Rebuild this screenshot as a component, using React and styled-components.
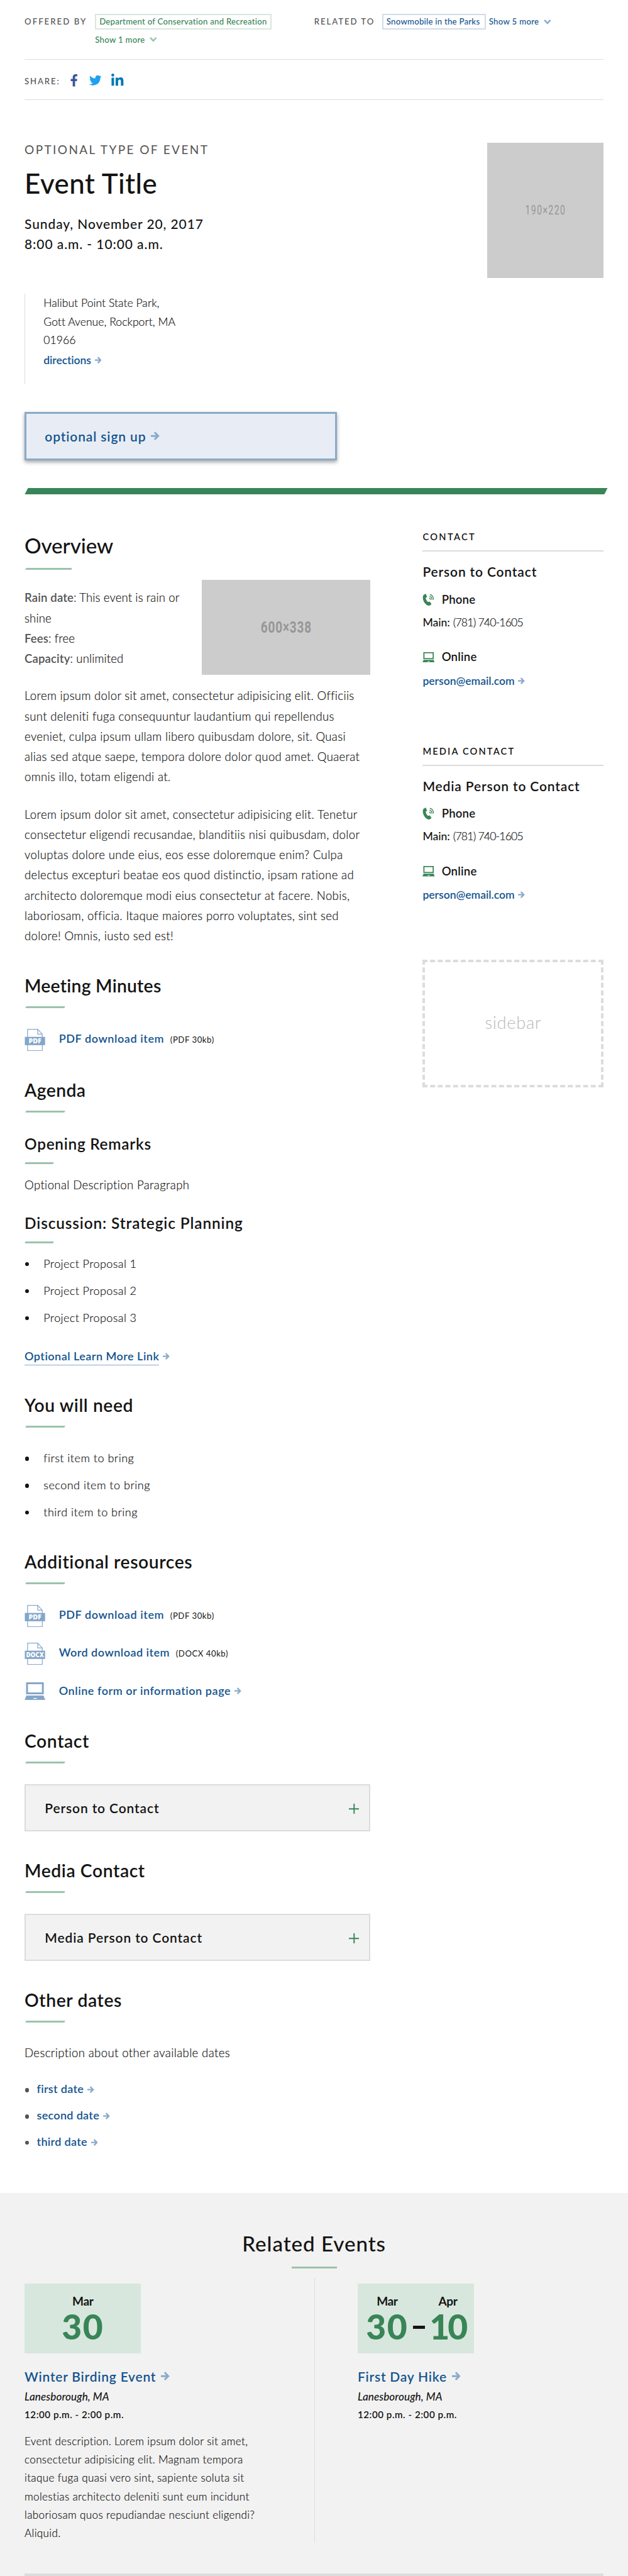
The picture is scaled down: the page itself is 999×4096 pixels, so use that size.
import React from "react";
import styled, { createGlobalStyle, css } from "styled-components";
import { FaFacebookF, FaTwitter, FaLinkedinIn } from "react-icons/fa";

const c = {
  ink: "#141414", gray: "#535353", rule: "#dcdcdc", panel: "#f2f2f2",
  green: "#388557", greenSoft: "#9bc3ab", greenPale: "#d8e7dd",
  blue: "#14558f", blueSoft: "#8aaaca", bluePale: "#e8edf5",
};

const GlobalStyle = createGlobalStyle`
  * { box-sizing: border-box; }
  body { margin: 0; background: #fff; overflow: hidden; }
  h1, h2, h3, p, ul { margin: 0; padding: 0; font-weight: inherit; }
  ul { list-style: none; }
  a { text-decoration: none; color: inherit; }
`;

const spaced = css`letter-spacing: ${(p) => p.$ls || 0}px;`;
const light = css`
  font-weight: 300;
  -webkit-text-stroke: 0.22px currentColor;
`;

const Page = styled.div`
  zoom: 0.9759;
  width: 1024px;
  font-family: Lato, "Open Sans", sans-serif;
  color: ${c.ink};
  white-space: nowrap;
`;
const Container = styled.div`padding: 0 40px;`;

/* ---- header ---- */
const Relations = styled.div`
  display: grid;
  grid-template-columns: 472px 1fr;
  height: 97px;
  padding-top: 23px;
  border-bottom: 1.1px solid ${c.rule};
  font-size: 13.5px;
  line-height: 25px;
  font-weight: 500;
`;
const Relation = styled.div`display: flex;`;
const Label = styled.span`
  font-size: 13.5px;
  font-weight: 500;
  color: ${c.gray};
  letter-spacing: ${(p) => p.$ls}px;
  width: ${(p) => p.$w}px;
`;
const TagList = styled.div`
  display: flex;
  align-items: flex-start;
  flex-direction: ${(p) => (p.$stack ? "column" : "row")};
  gap: ${(p) => (p.$stack ? 4 : 5)}px;
  color: ${(p) => (p.$stack ? c.green : c.blue)};
`;
const Tag = styled.a`
  display: block;
  height: 25px;
  line-height: 21px;
  width: ${(p) => p.$w}px;
  padding-left: 5px;
  border: 2.1px solid ${(p) => (p.$green ? c.greenPale : "#d0dcea")};
  ${spaced}
`;
const More = styled.span`
  display: flex;
  align-items: center;
  gap: 8px;
  ${spaced}
`;
const Share = styled.div`
  display: flex;
  align-items: center;
  height: 66px;
  padding-top: 3px;
  border-bottom: 1.1px solid ${c.rule};
  ${Label} { padding-top: 3px; }
`;
const Social = styled.span`
  display: flex;
  justify-content: center;
  width: 22px;
  margin-left: ${(p) => p.$gap}px;
  color: ${(p) => p.$color};
`;

/* ---- hero ---- */
const Hero = styled.div`
  display: flex;
  justify-content: space-between;
  padding-top: 70px;
`;
const EventType = styled.p`
  font-size: 19.5px;
  line-height: 22px;
  letter-spacing: 2.45px;
  color: ${c.gray};
`;
const Title = styled.h1`
  margin-top: 17px;
  font-size: 45px;
  line-height: 54px;
  font-weight: 500;
  letter-spacing: 0.5px;
`;
const When = styled.p`
  margin-top: 22.5px;
  font-size: 21.5px;
  line-height: 33px;
  font-weight: 500;
  letter-spacing: 0.95px;
`;
const Placeholder = styled.div`
  display: flex;
  align-items: center;
  justify-content: center;
  flex: none;
  width: ${(p) => p.$w}px;
  height: ${(p) => p.$h}px;
  background: #ccc;
  color: #969696;
  font: ${(p) => (p.$bold ? 700 : 400)} ${(p) => p.$size}px Roboto, sans-serif;
  letter-spacing: ${(p) => p.$ls}px;
  span { transform: scaleX(0.72); }
`;
const Address = styled.div`
  margin-top: 27px;
  height: 147px;
  padding-left: 30px;
  border-left: 1.1px solid ${c.rule};
  font-size: 18px;
  line-height: 30px;
  letter-spacing: 0.05px;
  p { margin-top: -1px; ${light} }
`;
const TextLink = styled.a`
  display: flex;
  align-items: center;
  gap: ${(p) => p.$gap ?? 6}px;
  min-height: ${(p) => p.$lh || 28}px;
  margin-top: ${(p) => p.$mt || 0}px;
  font-size: ${(p) => p.$size || 18}px;
  line-height: ${(p) => p.$lh || 28}px;
  font-weight: 600;
  color: ${c.blue};
  -webkit-text-stroke: 0;
  ${spaced}
`;
const SignUp = styled.a`
  display: flex;
  align-items: center;
  gap: 8px;
  width: 509px;
  height: 79px;
  margin-top: 45px;
  padding-left: 30px;
  border: 3.1px solid ${c.blueSoft};
  background: ${c.bluePale};
  box-shadow: 0 3px 6px rgba(0, 0, 0, 0.35);
  color: ${c.blue};
  font-size: 21.5px;
  font-weight: 600;
  letter-spacing: 0.9px;
`;
const Band = styled.div`
  height: 10px;
  margin: 45px -4px 0 3.5px;
  background: ${c.green};
  transform: skewX(-27deg);
`;

/* ---- body ---- */
const Columns = styled.div`
  display: grid;
  grid-template-columns: 564px 295px;
  gap: 85px;
  height: 2768px;
`;
const Heading = styled.h2`
  margin-top: ${(p) => p.$mt}px;
  font-size: ${(p) => (p.$large ? 34 : 29)}px;
  line-height: ${(p) => (p.$large ? 42 : 36)}px;
  font-weight: ${(p) => (p.$large ? 500 : 600)};
  ${spaced}
  &::after {
    content: "";
    display: block;
    width: ${(p) => (p.$large ? 75 : 64)}px;
    height: 3px;
    margin: ${(p) => (p.$large ? 16 : 15)}px 0 0 2.5px;
    background: ${c.greenSoft};
    transform: skewX(-27deg);
  }
`;
const SubHeading = styled.h3`
  margin-top: ${(p) => p.$mt}px;
  font-size: 25px;
  line-height: 30px;
  font-weight: 600;
  ${spaced}
  &::after {
    content: "";
    display: block;
    width: 46px;
    height: 3px;
    margin: 14.5px 0 0 1.5px;
    background: ${c.greenSoft};
    transform: skewX(-27deg);
  }
`;
const Facts = styled.div`
  display: flex;
  justify-content: space-between;
  margin-top: 16px;
`;
const Copy = styled.p`
  margin-top: ${(p) => p.$mt || 0}px;
  font-size: 19px;
  line-height: 33px;
  ${light}
  ${spaced}
  b { font-weight: 600; color: ${c.gray}; -webkit-text-stroke: 0; }
`;
const Bullets = styled.ul`
  margin-top: ${(p) => p.$mt}px;
  font-size: 18.5px;
  line-height: 44px;
  ${light}
  ${spaced}
  li { display: flex; align-items: center; }
  li::before {
    content: "";
    width: 6.5px;
    height: 6.5px;
    margin: 2px 24px 0 0.5px;
    border-radius: 50%;
    background: ${c.ink};
  }
`;
const DateLinks = styled(Bullets)`
  line-height: 43px;
  li::before { margin-right: 13px; background: ${c.gray}; }
`;
const Underlined = styled.span`
  line-height: 26px;
  border-bottom: 1.1px solid ${c.blueSoft};
  margin-top: 2px;
`;
const Download = styled.div`
  display: flex;
  align-items: center;
  height: ${(p) => p.$h || 36}px;
  margin-top: ${(p) => p.$mt}px;
  & > svg { margin-right: 22px; flex: none; }
  ${TextLink} { margin-bottom: ${(p) => (p.$h ? 1 : 4)}px; }
`;
const Size = styled.span`
  margin: 0 0 1px 10px;
  font-size: 13.5px;
  letter-spacing: 0.56px;
`;
const Accordion = styled.div`
  display: flex;
  align-items: center;
  justify-content: space-between;
  height: 77px;
  margin-top: 34px;
  padding: 0 16.5px 0 31px;
  border: 2.1px solid ${c.rule};
  background: ${c.panel};
  font-size: 21.5px;
  font-weight: 600;
  letter-spacing: 0.9px;
  svg { margin-top: 3px; }
`;

/* ---- sidebar ---- */
const ContactCard = styled.section`margin-top: ${(p) => p.$mt}px;`;
const CardLabel = styled.h2`
  padding-bottom: 12px;
  border-bottom: 2.1px solid ${c.rule};
  font-size: 15px;
  line-height: 20px;
  font-weight: 600;
  ${spaced}
`;
const CardName = styled.h3`
  margin: 18.5px 0 19.5px;
  font-size: 21.5px;
  line-height: 28px;
  font-weight: 600;
  letter-spacing: 0.88px;
`;
const Channel = styled.div`
  display: flex;
  align-items: center;
  gap: 11px;
  height: 24px;
  margin-top: ${(p) => p.$mt || 0}px;
  font-size: 19px;
  line-height: 22px;
  font-weight: 600;
  letter-spacing: 0.25px;
`;
const Phone = styled.p`
  margin-top: 11px;
  font-size: 18px;
  line-height: 28px;
  ${light}
  letter-spacing: -0.8px;
  b { font-weight: 500; letter-spacing: 0; -webkit-text-stroke: 0; margin-right: 1px; }
`;
const Slot = styled.div`
  display: flex;
  align-items: center;
  justify-content: center;
  height: 208px;
  margin-top: 92px;
  padding-bottom: 4px;
  border: 4.1px dashed ${c.rule};
  color: #b9b9b9;
  font-size: 28px;
  font-weight: 300;
  letter-spacing: 0.7px;
`;

/* ---- related events ---- */
const Related = styled.section`
  height: 625px;
  padding: 62px 40px 0;
  background: ${c.panel};
`;
const RelatedTitle = styled.h2`
  text-align: center;
  font-size: 34px;
  line-height: 42px;
  font-weight: 500;
  letter-spacing: 0.95px;
  &::after {
    content: "";
    display: block;
    width: 74px;
    height: 3px;
    margin: 16px auto 0;
    background: ${c.greenSoft};
  }
`;
const Events = styled.div`
  display: grid;
  grid-template-columns: 473px 1fr;
  height: 431px;
  margin-top: 16px;
`;
const Event = styled.article`
  padding: 9px 0 0 ${(p) => (p.$second ? 70 : 0)}px;
  border-right: ${(p) => (p.$second ? "0" : `1.1px solid ${c.rule}`)};
`;
const DateBox = styled.div`
  display: flex;
  justify-content: center;
  align-items: flex-end;
  gap: 7px;
  width: 190px;
  height: 114px;
  padding-bottom: 16px;
  background: ${c.greenPale};
`;
const Day = styled.div`
  text-align: center;
  width: ${(p) => p.$w}px;
  font-size: 19.5px;
  line-height: 24px;
  font-weight: 700;
  letter-spacing: -0.4px;
  strong {
    display: block;
    margin-top: 2px;
    font-size: 56.5px;
    line-height: 56px;
    font-weight: 900;
    letter-spacing: ${(p) => p.$ls}px;
    color: ${c.green};
  }
`;
const Dash = styled.span`
  width: 20px;
  height: 6px;
  margin-bottom: 24px;
  background: ${c.ink};
`;
const Place = styled.p`
  margin-top: 3.5px;
  font-size: 17.5px;
  line-height: 28px;
  font-weight: 500;
  font-style: italic;
  letter-spacing: 0.1px;
`;
const Hours = styled.p`
  margin-top: 4.5px;
  font-size: 15.5px;
  line-height: 24px;
  font-weight: 600;
  letter-spacing: 0.55px;
`;
const Summary = styled.p`
  margin-top: 15.5px;
  font-size: 17.5px;
  line-height: 30px;
  ${light}
  letter-spacing: 0.36px;
`;
const EndRule = styled.div`
  height: 4px;
  margin-top: 50.5px;
  background: ${c.rule};
`;

/* ---- icons ---- */
const Arrow = ({ size = 11 }) => (
  <svg width={size} height={size * 1.05} viewBox="0 0 11 11.5" fill="none" stroke={c.blueSoft} strokeWidth="2.4">
    <path d="M0 5.75H8.6M4.7 1l4.7 4.75-4.7 4.75" />
  </svg>
);
const Chevron = ({ color }) => (
  <svg width="12" height="8" viewBox="0 0 12 8" fill="none" stroke={color} strokeWidth="2.6">
    <path d="M1.2 1L6 6l4.8-5" />
  </svg>
);
const Plus = () => (
  <svg width="17" height="17" viewBox="0 0 17 17" stroke={c.green} strokeWidth="2">
    <path d="M8.5 0v17M0 8.5h17" />
  </svg>
);
const PhoneIcon = () => (
  <svg width="20" height="20" viewBox="0 0 20 20">
    <path fill={c.green} d="M1.4 2.6 4.6.3c.5-.3.9-.1 1.1.4l1.5 3.7c.2.5.1.9-.3 1.2L5.3 7c.3 2.9 1.9 5.400 4.100 6.700l2-.7c.5-.2.9 0 1.100.4l2 3.200c.3.5.2.9-.3 1.200l-2.900 1.800C4.900 19.700-1.600 9.500 1.400 2.600z" />
    <g fill="none" stroke={c.green} strokeWidth="1.400">
      <path d="M11.100 7.200c1.400.3 1.900 1.300 1.700 2.700M11.500 4.200c2.800.5 4.100 2.800 3.700 5.700M12.200 1.300c4.200.8 6.200 4.500 5.400 8.600" />
    </g>
  </svg>
);
const Laptop = ({ w, h, color }) => (
  <svg width={w} height={h} viewBox="0 0 33 29" preserveAspectRatio="none">
    <rect x="4" y="1.5" width="25" height="16.5" fill="none" stroke={color} strokeWidth="3" />
    <path fill={color} d="M3 21.5h27l3 7.5H0zM14 25.5v1.5h5.5v-1.5z" fillRule="evenodd" />
  </svg>
);
const FileIcon = ({ type }) => (
  <svg width="34" height="36" viewBox="0 0 34 36">
    <path d="M5 .6h16.5l7.5 8v26.8H5zM21.5.6v8H29" fill="none" stroke={c.blueSoft} strokeWidth="1.3" />
    <rect x=".5" y="13" width="33" height="13.5" fill="#84a6c8" />
    <text x="17" y="23.600" textAnchor="middle" fill="#fff" fontFamily="Open Sans" fontWeight="800" fontSize={type === "PDF" ? 11 : 10}>
      {type}
    </text>
  </svg>
);

const Contact = ({ mt, label, ls, name }) => (
  <ContactCard $mt={mt}>
    <CardLabel $ls={ls}>{label}</CardLabel>
    <CardName>{name}</CardName>
    <Channel><PhoneIcon />Phone</Channel>
    <Phone><b>Main:</b> (781) 740-1605</Phone>
    <Channel $mt={31}><Laptop w={20} h={17} color={c.green} />Online</Channel>
    <TextLink $mt={12} href="#">person@email.com<Arrow /></TextLink>
  </ContactCard>
);
const EventInfo = ({ title, ls }) => (
  <>
    <TextLink $size={21.5} $lh={30} $mt={22} $gap={8} $ls={ls} href="#">{title}<Arrow size={14} /></TextLink>
    <Place>Lanesborough, MA</Place>
    <Hours>12:00 p.m. - 2:00 p.m.</Hours>
  </>
);

export default function App() {
  return (
    <Page>
      <GlobalStyle />
      <Container>
        <Relations>
          <Relation>
            <Label $w={115} $ls={2.1}>OFFERED BY</Label>
            <TagList $stack>
              <Tag $green $w={288} $ls={0.27} href="#">Department of Conservation and Recreation</Tag>
              <More $ls={0.3}>Show 1 more<Chevron color={c.greenSoft} /></More>
            </TagList>
          </Relation>
          <Relation>
            <Label $w={111} $ls={2}>RELATED TO</Label>
            <TagList>
              <Tag $w={169} $ls={0.27} href="#">Snowmobile in the Parks</Tag>
              <More $ls={0.33}>Show 5 more<Chevron color={c.blueSoft} /></More>
            </TagList>
          </Relation>
        </Relations>
        <Share>
          <Label $w={64} $ls={1.9}>SHARE:</Label>
          <Social $gap={6} $color="#3b5998"><FaFacebookF size={20} /></Social>
          <Social $gap={13} $color="#1da1f2"><FaTwitter size={20} /></Social>
          <Social $gap={13} $color="#0077b5"><FaLinkedinIn size={22.5} /></Social>
        </Share>

        <Hero>
          <div>
            <EventType>OPTIONAL TYPE OF EVENT</EventType>
            <Title>Event Title</Title>
            <When>Sunday, November 20, 2017<br />8:00 a.m. - 10:00 a.m.</When>
          </div>
          <Placeholder $w={190} $h={220} $size={20} $ls={2}><span>190×220</span></Placeholder>
        </Hero>
        <Address>
          <p>Halibut Point State Park,<br />Gott Avenue, Rockport, MA<br />01966</p>
          <TextLink $mt={6} $lh={24} $ls={-0.1} href="#">directions<Arrow /></TextLink>
        </Address>
        <SignUp href="#">optional sign up<Arrow size={14} /></SignUp>
        <Band />

        <Columns>
          <main>
            <Heading $large $mt={62.5} $ls={-0.1}>Overview</Heading>
            <Facts>
              <Copy $mt={13} $ls={0.15}>
                <b>Rain date</b>: This event is rain or<br />shine<br /><b>Fees</b>: free<br /><b>Capacity</b>: unlimited
              </Copy>
              <Placeholder $w={275} $h={155} $size={27} $ls={1.2} $bold><span>600×338</span></Placeholder>
            </Facts>
            <Copy $mt={18} $ls={0.36}>
              Lorem ipsum dolor sit amet, consectetur adipisicing elit. Officiis<br />
              sunt deleniti fuga consequuntur laudantium qui repellendus<br />
              eveniet, culpa ipsum ullam libero quibusdam dolore, sit. Quasi<br />
              alias sed atque saepe, tempora dolore dolor quod amet. Quaerat<br />
              omnis illo, totam eligendi at.
            </Copy>
            <Copy $mt={28} $ls={0.38}>
              Lorem ipsum dolor sit amet, consectetur adipisicing elit. Tenetur<br />
              consectetur eligendi recusandae, blanditiis nisi quibusdam, dolor<br />
              voluptas dolore unde eius, eos esse doloremque enim? Culpa<br />
              delectus excepturi beatae eos quod distinctio, ipsam ratione ad<br />
              architecto doloremque modi eius consectetur at facere. Nobis,<br />
              laboriosam, officia. Itaque maiores porro voluptates, sint sed<br />
              dolore! Omnis, iusto sed est!
            </Copy>

            <Heading $mt={47} $ls={0.25}>Meeting Minutes</Heading>
            <Download $mt={34}>
              <FileIcon type="PDF" />
              <TextLink $size={18.5} $ls={0.58} href="#">PDF download item</TextLink>
              <Size>(PDF 30kb)</Size>
            </Download>

            <Heading $mt={46} $ls={0.4}>Agenda</Heading>
            <SubHeading $mt={36.5} $ls={0.75}>Opening Remarks</SubHeading>
            <Copy $mt={17.5} $ls={0.4}>Optional Description Paragraph</Copy>
            <SubHeading $mt={31} $ls={0.9}>Discussion: Strategic Planning</SubHeading>
            <Bullets $mt={11.5} $ls={0.4}>
              <li>Project Proposal 1</li>
              <li>Project Proposal 2</li>
              <li>Project Proposal 3</li>
            </Bullets>
            <TextLink $mt={24.5} $size={18.5} $lh={33} $ls={0.47} href="#">
              <Underlined>Optional Learn More Link</Underlined><Arrow />
            </TextLink>

            <Heading $mt={46} $ls={0.6}>You will need</Heading>
            <Bullets $mt={27.5} $ls={0.5}>
              <li>first item to bring</li>
              <li>second item to bring</li>
              <li>third item to bring</li>
            </Bullets>

            <Heading $mt={41.5} $ls={0.6}>Additional resources</Heading>
            <Download $mt={34}>
              <FileIcon type="PDF" />
              <TextLink $size={18.5} $ls={0.58} href="#">PDF download item</TextLink>
              <Size>(PDF 30kb)</Size>
            </Download>
            <Download $mt={25}>
              <FileIcon type="DOCX" />
              <TextLink $size={18.5} $ls={0.48} href="#">Word download item</TextLink>
              <Size>(DOCX 40kb)</Size>
            </Download>
            <Download $mt={28} $h={30}>
              <Laptop w={34} h={29} color="#84a6c8" />
              <TextLink $size={18.5} $ls={0.55} href="#">Online form or information page<Arrow /></TextLink>
            </Download>

            <Heading $mt={49} $ls={0.6}>Contact</Heading>
            <Accordion>Person to Contact<Plus /></Accordion>
            <Heading $mt={46} $ls={0.6}>Media Contact</Heading>
            <Accordion>Media Person to Contact<Plus /></Accordion>

            <Heading $mt={46} $ls={0.6}>Other dates</Heading>
            <Copy $mt={33} $ls={0.4}>Description about other available dates</Copy>
            <DateLinks $mt={22}>
              {["first date", "second date", "third date"].map((d) => (
                <li key={d}><TextLink $size={18.5} $lh={43} $ls={0.3} href="#">{d}<Arrow /></TextLink></li>
              ))}
            </DateLinks>
          </main>

          <aside>
            <Contact mt={60} label="CONTACT" ls={2.4} name="Person to Contact" />
            <Contact mt={91} label="MEDIA CONTACT" ls={2.2} name="Media Person to Contact" />
            <Slot>sidebar</Slot>
          </aside>
        </Columns>
      </Container>

      <Related>
        <RelatedTitle>Related Events</RelatedTitle>
        <Events>
          <Event>
            <DateBox><Day $w={74} $ls={1.5}>Mar<strong>30</strong></Day></DateBox>
            <EventInfo title="Winter Birding Event" ls={0.8} />
            <Summary>
              Event description. Lorem ipsum dolor sit amet,<br />
              consectetur adipisicing elit. Magnam tempora<br />
              itaque fuga quasi vero sint, sapiente soluta sit<br />
              molestias architecto deleniti sunt eum incidunt<br />
              laboriosam quos repudiandae nesciunt eligendi?<br />
              Aliquid.
            </Summary>
          </Event>
          <Event $second>
            <DateBox>
              <Day $w={70} $ls={1.5}>Mar<strong>30</strong></Day>
              <Dash />
              <Day $w={60} $ls={-3}>Apr<strong>10</strong></Day>
            </DateBox>
            <EventInfo title="First Day Hike" ls={0.8} />
          </Event>
        </Events>
        <EndRule />
      </Related>
    </Page>
  );
}
